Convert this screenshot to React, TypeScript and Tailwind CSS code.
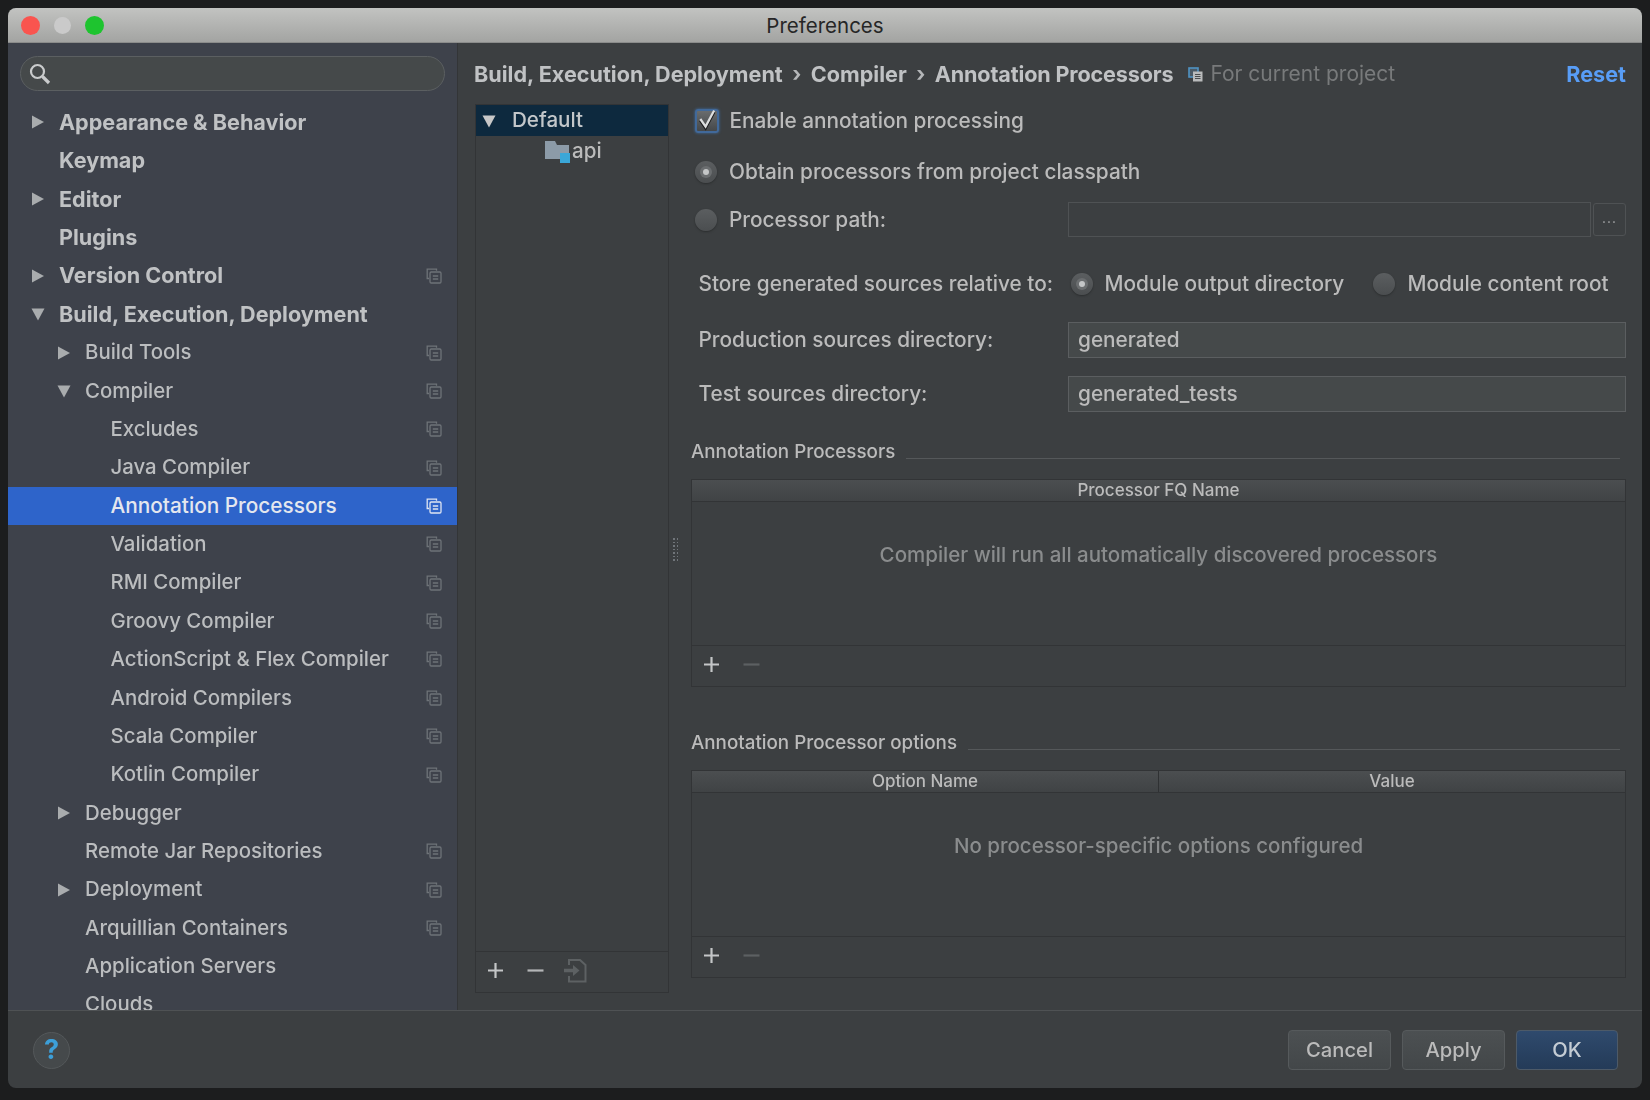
const FONT = "font-['Inter','Roboto',sans-serif]";

type TreeRow = {
  label: string;
  level: 0 | 1 | 2;
  arrow?: "right" | "down";
  bold?: boolean;
  copy?: boolean;
  selected?: boolean;
};

const rows: TreeRow[] = [
  { label: "Appearance & Behavior", level: 0, arrow: "right", bold: true },
  { label: "Keymap", level: 0, bold: true },
  { label: "Editor", level: 0, arrow: "right", bold: true },
  { label: "Plugins", level: 0, bold: true },
  { label: "Version Control", level: 0, arrow: "right", bold: true, copy: true },
  { label: "Build, Execution, Deployment", level: 0, arrow: "down", bold: true },
  { label: "Build Tools", level: 1, arrow: "right", copy: true },
  { label: "Compiler", level: 1, arrow: "down", copy: true },
  { label: "Excludes", level: 2, copy: true },
  { label: "Java Compiler", level: 2, copy: true },
  { label: "Annotation Processors", level: 2, copy: true, selected: true },
  { label: "Validation", level: 2, copy: true },
  { label: "RMI Compiler", level: 2, copy: true },
  { label: "Groovy Compiler", level: 2, copy: true },
  { label: "ActionScript & Flex Compiler", level: 2, copy: true },
  { label: "Android Compilers", level: 2, copy: true },
  { label: "Scala Compiler", level: 2, copy: true },
  { label: "Kotlin Compiler", level: 2, copy: true },
  { label: "Debugger", level: 1, arrow: "right" },
  { label: "Remote Jar Repositories", level: 1, copy: true },
  { label: "Deployment", level: 1, arrow: "right", copy: true },
  { label: "Arquillian Containers", level: 1, copy: true },
  { label: "Application Servers", level: 1 },
  { label: "Clouds", level: 1 },
];

const Arrow = ({ dir, light }: { dir: "right" | "down"; light?: boolean }) => (
  <svg width="14" height="14" viewBox="0 0 14 14" className={light ? "text-[#c8c8c8]" : "text-[#a9acae]"}>
    {dir === "right" ? <path d="M1 0.5 L13 7 L1 13.5 Z" fill="currentColor" /> : <path d="M0.5 1.5 L13.5 1.5 L7 13.5 Z" fill="currentColor" />}
  </svg>
);

const CopyIcon = ({ color = "#6e7378", size = 16 }: { color?: string; size?: number }) => (
  <svg width={size} height={size} viewBox="0 0 16 16" fill="none" stroke={color} strokeWidth="1.3">
    <path d="M10.5 2.8 V1.2 H1.2 V10.5 H3" />
    <rect x="4" y="4" width="11" height="11" rx="1.2" />
    <path d="M6.8 8 H12.2 M6.8 11 H12.2" />
  </svg>
);

// project scope marker next to the breadcrumb: blue sheet behind a grey one
const ProjectIcon = () => (
  <svg width="15" height="15" viewBox="0 0 15 15">
    <rect x="1" y="1" width="9" height="9" fill="#4b5a66" stroke="#4f93c4" strokeWidth="1.6" />
    <rect x="5" y="4.5" width="9.5" height="10" fill="#b9bbbc" />
    <path d="M7 7.5 H12.5 M7 9.5 H12.5 M7 11.5 H12.5" stroke="#4a4d4f" strokeWidth="1" />
  </svg>
);

const Plus = () => (
  <svg width="17" height="17" viewBox="0 0 17 17">
    <path d="M8.5 1 V16 M1 8.5 H16" stroke="#c4c6c7" strokeWidth="2.2" />
  </svg>
);

const Minus = ({ dim }: { dim?: boolean }) => (
  <svg width="17" height="17" viewBox="0 0 17 17">
    <path d="M0.5 8.5 H16.5" stroke={dim ? "#5c6062" : "#b4b6b7"} strokeWidth="2.2" />
  </svg>
);

const ImportIcon = () => (
  <svg width="24" height="25" viewBox="0 0 24 25" fill="none" stroke="#5d6163" strokeWidth="2">
    <path d="M6 7 V2 H17 L22.5 7 V23.5 H6 V18" />
    <path d="M1 12.5 H12" strokeWidth="3.5" />
    <path d="M10 7 L16.5 12.5 L10 18 Z" fill="#5d6163" strokeWidth="0" />
  </svg>
);

const Radio = ({ on }: { on?: boolean }) => (
  <span className="flex h-[22px] w-[22px] shrink-0 items-center justify-center rounded-full bg-gradient-to-b from-[#5b5e60] to-[#4b4e50] shadow-[0_1px_2px_#2b2d2e]">
    {on && <span className="h-[6px] w-[6px] rounded-full bg-[#c4c6c7] shadow-[0_0_0_3px_#6b6e70]" />}
  </span>
);

const ToolbarRow = ({ children }: { children: React.ReactNode }) => (
  <div className="flex h-[41px] items-center border-t border-[#323436] pb-[3px] pl-[11px]">{children}</div>
);

const TableBox = ({ head, empty }: { head: string[]; empty: string }) => (
  <div className="mt-[15px] flex h-[208px] flex-col border border-[#323436]">
    <div className="flex h-[22px] shrink-0 border-b border-[#323436] bg-gradient-to-b from-[#4b4e50] to-[#404345] text-[17px] font-medium leading-[21px] text-[#bbbbbb]">
      {head.map((h, i) => (
        <div key={h} className={"flex-1 text-center " + (i > 0 ? "border-l border-[#2f3133]" : "")}>
          {h}
        </div>
      ))}
    </div>
    <div className="flex flex-1 items-start justify-center pt-[37px] text-[20.5px] leading-[32px] text-[#8a8c8d]">{empty}</div>
    <ToolbarRow>
      <Plus />
      <span className="ml-[23px]">
        <Minus dim />
      </span>
    </ToolbarRow>
  </div>
);

const GroupTitle = ({ title, className }: { title: string; className: string }) => (
  <div className={"flex h-[24px] items-center " + className}>
    <span className="text-[18.8px] font-medium text-[#bbbbbb]">{title}</span>
    <div className="relative top-[6px] ml-[11px] mr-[6px] h-px flex-1 bg-[#55585a]" />
  </div>
);

const App = () => {
  return (
    <div className={"h-[1100px] w-[1650px] overflow-hidden bg-[#1c1d1e] px-[8px] pb-[12px] pt-[8px] " + FONT}>
      <div className="flex h-full flex-col overflow-hidden rounded-[8px] bg-[#3c3f41] blur-[0.7px]">
        <div className="relative flex h-[35px] shrink-0 items-center justify-center border-b border-[#8b8c8b] bg-gradient-to-b from-[#c2c3c1] to-[#a3a4a2]">
          <div className="absolute left-[13px] flex items-center">
            <span className="h-[19px] w-[19px] rounded-full bg-[#f9544f]" />
            <span className="ml-[14px] h-[17px] w-[17px] rounded-full bg-[#cacaca]" />
            <span className="ml-[14px] h-[19px] w-[19px] rounded-full bg-[#1ec42f]" />
          </div>
          <span className="pt-[2px] text-[20.5px] text-[#262626]">Preferences</span>
        </div>

        <div className="flex min-h-0 flex-1">
          <aside className="flex w-[450px] shrink-0 flex-col border-r border-[#333537] bg-[#3e424b]">
            <div className="mx-[12px] mt-[13px] flex h-[35px] shrink-0 items-center rounded-full border border-[#5b5f61] bg-[#45494a] pl-[7px]">
              <svg width="24" height="24" viewBox="0 0 24 24" fill="none" stroke="#c9cbcc">
                <circle cx="9.5" cy="9.5" r="6.5" strokeWidth="2.2" />
                <path d="M14.5 14.5 L21 21" strokeWidth="3.2" />
              </svg>
            </div>
            <div className="mt-[12.5px] min-h-0 flex-1 overflow-hidden">
              {rows.map((r) => (
                <div
                  key={r.label}
                  className={
                    "relative flex h-[38.35px] items-center " +
                    (r.level === 0 ? "pl-[51px] " : r.level === 1 ? "pl-[77px] " : "pl-[102.5px] ") +
                    (r.selected
                      ? "bg-[#2e64ca] pb-[1px] text-[20.8px] font-medium text-[#e4e7ee] "
                      : r.bold
                        ? "pb-[1px] text-[21.6px] font-bold text-[#c0c2c4] "
                        : "text-[20.4px] font-[450] text-[#bbbdbf] ")
                  }
                >
                  {r.arrow && (
                    <span className={"absolute " + (r.level === 0 ? "left-[23px]" : "left-[49px]")}>
                      <Arrow dir={r.arrow} />
                    </span>
                  )}
                  {r.label}
                  {r.copy && (
                    <span className="absolute left-[418px]">
                      <CopyIcon color={r.selected ? "#dfe5f2" : "#6e7378"} />
                    </span>
                  )}
                </div>
              ))}
            </div>
          </aside>

          <main className="flex min-w-0 flex-1 flex-col pl-[16px] pr-[16px]">
            <div className="flex h-[62px] shrink-0 items-center text-[21px]">
              <span className="text-[21.6px] font-bold text-[#c0c2c4]">Build, Execution, Deployment</span>
              <span className="mx-[9.5px] font-bold text-[#b4b6b8]">›</span>
              <span className="text-[21.6px] font-bold text-[#c0c2c4]">Compiler</span>
              <span className="mx-[9.5px] font-bold text-[#b4b6b8]">›</span>
              <span className="text-[21.6px] font-bold tracking-[-0.15px] text-[#c0c2c4]">Annotation Processors</span>
              <span className="ml-[15px] mr-[7px]">
                <ProjectIcon />
              </span>
              <span className="text-[#787a7b]">For current project</span>
              <span className="ml-auto text-[21.6px] font-bold text-[#589df6]">Reset</span>
            </div>

            <div className="flex">
              <div className="-mt-px ml-[1px] flex h-[889px] w-[194px] shrink-0 flex-col border border-[#323436]">
                <div className="flex h-[31px] shrink-0 items-center bg-[#0d293e] pl-[6px] text-[20.6px] font-[450] text-[#c3c7ca]">
                  <Arrow dir="down" light />
                  <span className="ml-[16px]">Default</span>
                </div>
                <div className="flex h-[30px] items-center pl-[69px] text-[20.6px] font-[450] text-[#bbbbbb]">
                  <svg width="25" height="23" viewBox="0 0 25 23">
                    <path d="M0 1 H10 L12 5 H24 V19 H0 Z" fill="#8c9ba8" />
                    <rect x="15" y="13" width="10" height="10" fill="#3aa7d8" />
                  </svg>
                  <span className="ml-[2px]">api</span>
                </div>
                <div className="flex-1" />
                <div className="flex h-[41px] items-center border-t border-[#323436] pb-[3px] pl-[11px]">
                  <Plus />
                  <span className="ml-[23px]">
                    <Minus />
                  </span>
                  <span className="ml-[19px]">
                    <ImportIcon />
                  </span>
                </div>
              </div>

              <div className="flex w-[22px] shrink-0 items-start pl-[4px] pt-[433px]">
                <div className="grid grid-cols-2 gap-x-[2px] gap-y-[2px]">
                  {Array.from({ length: 14 }).map((_, i) => (
                    <span key={i} className="h-[1.5px] w-[1.5px] bg-[#70757a]" />
                  ))}
                </div>
              </div>

              <div className="w-[935px] text-[20.8px] font-[450] text-[#bbbbbb]">
                <div className="flex h-[32px] items-center">
                  <span className="ml-[4px] flex h-[24px] w-[24px] shrink-0 items-center justify-center rounded-[3px] border-2 border-[#41699a] bg-gradient-to-b from-[#696c6e] to-[#45484a] shadow-[0_0_3px_#3f6fa5]">
                    <svg width="21" height="24" viewBox="0 0 21 24" fill="none" className="-mt-[4px]">
                      <path d="M3.5 12 L9 20 L18 3" stroke="#18191a" strokeWidth="3" transform="translate(0 1.5)" />
                      <path d="M3.5 12 L9 20 L18 3" stroke="#dcdedf" strokeWidth="2.4" />
                    </svg>
                  </span>
                  <span className="ml-[10.5px]">Enable annotation processing</span>
                </div>

                <div className="mt-[19px] flex h-[32px] items-center pl-[4px]">
                  <Radio on />
                  <span className="ml-[12px]">Obtain processors from project classpath</span>
                </div>

                <div className="mt-[14px] flex h-[35px] items-center pl-[4px]">
                  <Radio />
                  <span className="ml-[12px] w-[339px]">Processor path:</span>
                  <div className="h-[35px] w-[523px] border border-[#4f5254] bg-[#3c3f41]" />
                  <div className="ml-[2px] flex h-[33px] w-[33px] items-center justify-center rounded-[3px] border border-[#4f5254] pb-[2px] text-[13px] tracking-[1px] text-[#a0a2a3]">
                    ...
                  </div>
                </div>

                <div className="mt-[31px] flex h-[32px] items-center pl-[7.5px]">
                  <span className="w-[372.5px]">Store generated sources relative to:</span>
                  <Radio on />
                  <span className="ml-[11.5px] w-[268px]">Module output directory</span>
                  <Radio />
                  <span className="ml-[13px]">Module content root</span>
                </div>

                <div className="mt-[22px] flex items-center pl-[7.5px]">
                  <span className="w-[369.5px]">Production sources directory:</span>
                  <div className="flex h-[36px] flex-1 items-center border border-[#5b5e60] bg-[#45494a] pl-[9px]">generated</div>
                </div>

                <div className="mt-[18px] flex items-center pl-[7.5px]">
                  <span className="w-[369.5px]">Test sources directory:</span>
                  <div className="flex h-[36px] flex-1 items-center border border-[#5b5e60] bg-[#45494a] pl-[9px]">generated_tests</div>
                </div>

                <GroupTitle title="Annotation Processors" className="mt-[28px]" />
                <TableBox head={["Processor FQ Name"]} empty="Compiler will run all automatically discovered processors" />

                <GroupTitle title="Annotation Processor options" className="mt-[44px]" />
                <TableBox head={["Option Name", "Value"]} empty="No processor-specific options configured" />
              </div>
            </div>
          </main>
        </div>

        <div className="flex h-[78px] shrink-0 items-center border-t border-[#4f5254] pl-[25px] pr-[24px]">
          <span className="mt-[1px] flex h-[37px] w-[37px] items-center justify-center rounded-full border border-[#54585a] bg-[#45494b] text-[27px] font-bold text-[#3d9fd8]">
            ?
          </span>
          <div className="ml-auto flex gap-[11px] text-[20.2px] font-[450] text-[#bbbbbb]">
            <button className="h-[40px] w-[103px] rounded-[4px] border border-[#565a5c] bg-gradient-to-b from-[#4c5052] to-[#434749] pt-[1px]">Cancel</button>
            <button className="h-[40px] w-[103px] rounded-[4px] border border-[#565a5c] bg-gradient-to-b from-[#4c5052] to-[#434749] pt-[1px]">Apply</button>
            <button className="h-[40px] w-[102px] rounded-[4px] border border-[#4d5a68] bg-gradient-to-b from-[#2f4a6d] to-[#243b58] pt-[1px] text-[#c4ccd4]">OK</button>
          </div>
        </div>
      </div>
    </div>
  );
};

export default App;
